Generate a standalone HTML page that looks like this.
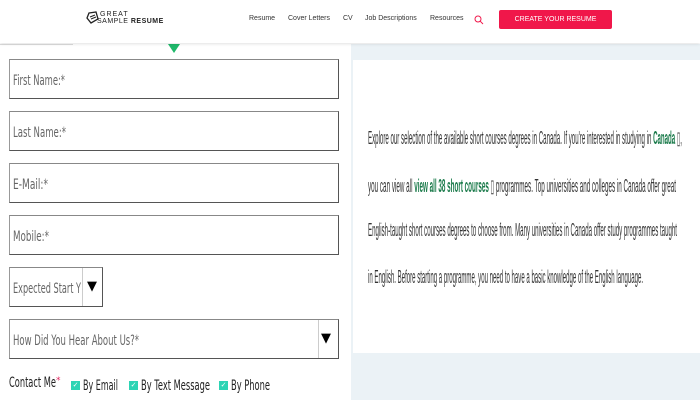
<!DOCTYPE html>
<html><head><meta charset="utf-8"><style>
*{margin:0;padding:0;box-sizing:border-box}
body{width:700px;height:400px;overflow:hidden;background:#fff;font-family:"DejaVu Sans","Liberation Sans",sans-serif;position:relative}
.hdr{position:absolute;left:0;top:0;width:700px;height:43px;background:#fff;box-shadow:0 1px 3px rgba(0,0,0,.12);z-index:2}
.nav{position:absolute;top:15px;font-family:"Liberation Sans",sans-serif;font-size:7px;color:#333}
.btn{position:absolute;left:499px;top:10px;width:113px;height:19px;background:#f0174a;border-radius:2px;color:#fff;font-family:"Liberation Sans",sans-serif;font-size:7px;text-align:center;line-height:19px}
.right{position:absolute;left:351px;top:44px;width:349px;height:356px;background:#ebf2f6}
.inner{position:absolute;left:353px;top:60px;width:347px;height:293px;background:#fff}
.inp{position:absolute;left:9px;width:330px;height:40px;border:1px solid #555;border-top-color:#888;border-left-color:#999;background:#fff}
.arr{position:absolute;font-size:13px;color:#000}
.cb{position:absolute;width:9px;height:9px;background:#2dd4b4;color:#fff;font-size:7px;line-height:9px;text-align:center;top:381px}
</style></head><body>
<div class="hdr">
  <svg style="position:absolute;left:86px;top:11px" width="14" height="14" viewBox="0 0 14 14"><path d="M3 2 L10 1 L12 8 L5 12 L1 7Z" fill="none" stroke="#222" stroke-width="1.3"/><path d="M4 6 L9 4 M5 8 L10 6" stroke="#222" stroke-width="1"/></svg>
  <div style="position:absolute;left:100px;top:11px;font-family:'Liberation Sans',sans-serif;font-size:7px;letter-spacing:1px;color:#222">GREAT</div>
  <div style="position:absolute;left:97px;top:18px;font-family:'Liberation Sans',sans-serif;font-size:7px;letter-spacing:.5px;color:#222">SAMPLE <b>RESUME</b></div>
  <div class="nav" style="left:249px">Resume</div>
  <div class="nav" style="left:288px">Cover Letters</div>
  <div class="nav" style="left:343px">CV</div>
  <div class="nav" style="left:365px">Job Descriptions</div>
  <div class="nav" style="left:430px">Resources</div>
  <svg style="position:absolute;left:474px;top:15px" width="10" height="10" viewBox="0 0 10 10"><circle cx="4" cy="4" r="3" fill="none" stroke="#f0174a" stroke-width="1"/><path d="M6.2 6.2 L9 9" stroke="#f0174a" stroke-width="1"/></svg>
  <div class="btn">CREATE YOUR RESUME</div>
</div>
<div style="position:absolute;left:0;top:44px;width:73px;height:1px;background:#ddd"></div>
<div class="right"></div>
<div class="inner"></div>
<svg style="position:absolute;left:168px;top:44px" width="12" height="10"><path d="M0 0 L12 0 L6 9Z" fill="#1fb86a"/></svg>
<div class="inp" style="top:59px"></div>
<div class="inp" style="top:111px"></div>
<div class="inp" style="top:163px"></div>
<div class="inp" style="top:215px"></div>
<div class="inp" style="top:267px;width:94px"></div>
<div style="position:absolute;left:82px;top:268px;width:1px;height:38px;background:#ccc"></div>
<div class="arr" style="left:87px;top:279px">▼</div>
<div class="inp" style="top:319px"></div>
<div style="position:absolute;left:318px;top:320px;width:1px;height:38px;background:#ccc"></div>
<div class="arr" style="left:321px;top:331px">▼</div>
<div class="cb" style="left:71px">✓</div>
<div class="cb" style="left:129px">✓</div>
<div class="cb" style="left:219px">✓</div>
<svg style="position:absolute;left:0;top:0" width="700" height="400">
<g font-family="DejaVu Sans, sans-serif" font-size="14" fill="#666">
<text x="13" y="85" textLength="52" lengthAdjust="spacingAndGlyphs">First Name:*</text>
<text x="13" y="137" textLength="53" lengthAdjust="spacingAndGlyphs">Last Name:*</text>
<text x="13" y="189" textLength="35" lengthAdjust="spacingAndGlyphs">E-Mail:*</text>
<text x="13" y="241" textLength="36" lengthAdjust="spacingAndGlyphs">Mobile:*</text>
<text x="13" y="293" textLength="68" lengthAdjust="spacingAndGlyphs">Expected Start Y</text>
<text x="13" y="345" textLength="126" lengthAdjust="spacingAndGlyphs">How Did You Hear About Us?*</text>
</g>
<g font-family="DejaVu Sans, sans-serif" font-size="14" fill="#222">
<text x="9" y="387" textLength="47" lengthAdjust="spacingAndGlyphs">Contact Me</text>
<text x="56" y="383" font-size="9" fill="#e0245e">*</text>
<text x="83" y="390" textLength="35" lengthAdjust="spacingAndGlyphs">By Email</text>
<text x="141" y="390" textLength="69" lengthAdjust="spacingAndGlyphs">By Text Message</text>
<text x="231" y="390" textLength="39" lengthAdjust="spacingAndGlyphs">By Phone</text>
</g>
<g font-family="Liberation Sans, sans-serif" font-size="18" fill="#333">
<text x="368" y="144" textLength="314" lengthAdjust="spacingAndGlyphs">Explore our selection of the available short courses degrees in Canada. If you're interested in studying in <tspan fill="#1a7a4a" font-weight="bold">Canada</tspan> ▯,</text>
<text x="368" y="192" textLength="308" lengthAdjust="spacingAndGlyphs">you can view all <tspan fill="#1a7a4a" font-weight="bold">view all 38 short courses</tspan> ▯ programmes. Top universities and colleges in Canada offer great</text>
<text x="368" y="236" textLength="309" lengthAdjust="spacingAndGlyphs">English-taught short courses degrees to choose from. Many universities in Canada offer study programmes taught</text>
<text x="368" y="283" textLength="275" lengthAdjust="spacingAndGlyphs">in English. Before starting a programme, you need to have a basic knowledge of the English language.</text>
</g></svg>
</body></html>
